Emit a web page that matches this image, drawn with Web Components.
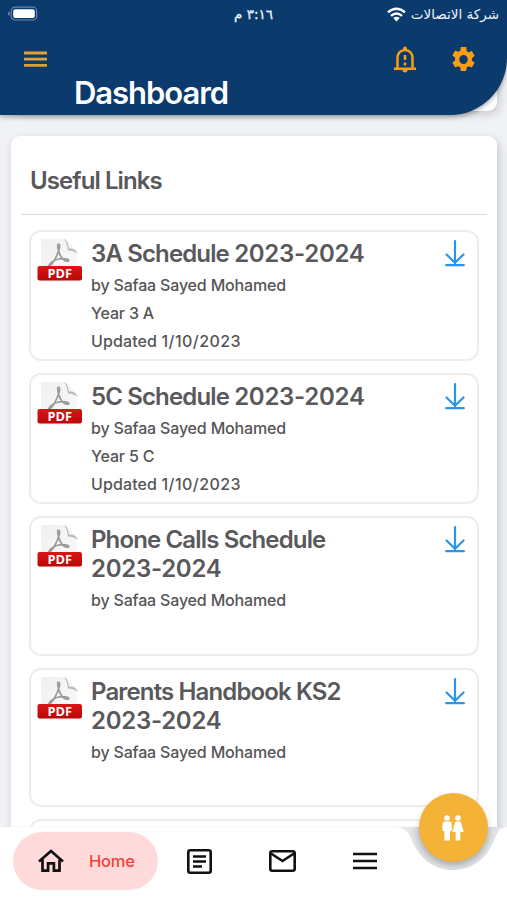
<!DOCTYPE html>
<html lang="en"><head><meta charset="utf-8"><title>Dashboard</title>
<style>
html,body{margin:0;height:900px;overflow:hidden;background:#f1f2f6}
body{font-family:Inter,"Liberation Sans",sans-serif;color:#58585a}
</style></head><body>
<school-app></school-app>
<script>
const define=(name,html,init)=>customElements.define(name,class extends HTMLElement{
  connectedCallback(){
    if(this.shadowRoot)return;
    const root=this.attachShadow({mode:'open'});
    const t=document.createElement('template');
    t.innerHTML=html;
    root.append(t.content.cloneNode(true));
    if(init)init(this,root);
  }
});

define('status-bar',`<style>
:host{display:grid;grid-template-columns:1fr auto 1fr;align-items:center;height:28px;padding:0 8px 0 8px;color:#eef5ff;font:14px/28px "DejaVu Sans",sans-serif}
svg{display:block}
.c{display:flex;align-items:center;justify-content:flex-end;gap:5px}
#time{font-size:13.5px;letter-spacing:-.35px;-webkit-text-stroke:.3px}
#net{font-size:13.5px;letter-spacing:0;white-space:nowrap}
</style>
<svg width="31" height="16" viewBox="0 0 31 16"><path d="M1.6 5.5v4.2Q0 9.400 0 7.600T1.600 5.500z" fill="#7d95b5"/><rect x="3.200" y="1.200" width="25.500" height="12.800" rx="3.800" fill="none" stroke="#6a86aa" stroke-width="1.200"/><rect x="5.200" y="3.200" width="21.600" height="8.800" rx="2" fill="#fff"/></svg>
<span id="time" dir="rtl">٣:١٦ م</span>
<div class="c"><svg width="19" height="15" viewBox="0 0 19 15"><g fill="none" stroke="#fff" stroke-width="2.500"><path d="M1 5.400Q9.500-2 18 5.400"/><path d="M4 8.900Q9.500 4.200 15 8.900"/></g><path d="M6.300 11.100Q9.500 8.400 12.700 11.100L9.500 14.500z" fill="#fff"/></svg><span id="net" dir="rtl">شركة الاتصالات</span></div>`);

define('app-header',`<style>
:host{display:block;box-sizing:border-box;height:115px;background:#0b3a6c;border-bottom-right-radius:57px;box-shadow:0 2px 5px #0005;overflow:hidden}
.row{display:flex;align-items:center;height:63px;padding:0 32.500px 0 24px}
.gap{flex:1}
svg{display:block}
.bell{margin-right:35px}
h1{margin:-17px 0 0 74px;color:#fff;font-size:31px;line-height:38px;font-weight:600;letter-spacing:-1.05px}
</style>
<status-bar></status-bar>
<div class="row">
<svg width="23" height="17" viewBox="0 0 23 17"><path d="M0 2h23M0 8.200h23M0 14.400h23" stroke="#e3a02f" stroke-width="2.800"/></svg><span class="gap"></span>
<svg class="bell" width="24" height="28" viewBox="0 0 24 28" fill="none" stroke="#f99d12"><path d="M4.500 22V11.500a7.500 7.500 0 0 1 15 0V22" stroke-width="2.500"/><path d="M1 22.700h22" stroke-width="2.600"/><path d="M12 9v5M12 16.500v3" stroke-width="2.600"/><path d="M10 4V2.500a2 2 0 0 1 4 0V4zM9.500 24h5a2.500 2.500 0 0 1-5 0z" fill="#f99d12" stroke="none"/></svg>
<svg width="23" height="25" viewBox="2.200 2 19.600 20" preserveAspectRatio="none"><path fill="#f99d12" d="M19.140 12.940c.040-.300.060-.610.060-.940s-.020-.640-.070-.940l2.030-1.580a.490.490 0 0 0 .120-.610l-1.920-3.320a.488.488 0 0 0-.590-.220l-2.390.960c-.500-.380-1.030-.700-1.620-.940l-.360-2.540A.484.484 0 0 0 13.920 2h-3.840c-.240 0-.430.170-.470.410l-.360 2.540c-.590.240-1.130.570-1.620.940l-2.390-.960a.477.477 0 0 0-.590.220L2.740 8.470c-.120.210-.080.470.120.610l2.030 1.580c-.050.300-.090.630-.090.940s.020.640.070.940l-2.030 1.580a.490.490 0 0 0-.120.610l1.920 3.320c.120.220.370.290.590.220l2.390-.960c.500.380 1.030.700 1.620.940l.360 2.540c.050.240.240.410.480.410h3.840c.240 0 .440-.170.470-.410l.360-2.540c.590-.240 1.130-.560 1.620-.940l2.390.960c.220.080.470 0 .590-.220l1.920-3.320a.477.477 0 0 0-.120-.610zM12 15.600a3.600 3.600 0 1 1 0-7.200 3.600 3.600 0 0 1 0 7.200z"/></svg>
</div><h1>Dashboard</h1>`);

define('pdf-icon',`<style>:host{display:block;width:46px;height:46px;margin-top:-1px}text{font:700 12.500px "Open Sans","Noto Sans",sans-serif}svg{display:block}</style>
<svg width="46" height="46" viewBox="0 0 46 46"><defs><linearGradient id="p" x2="1" y2="1"><stop stop-color="#f0f0f0"/><stop offset="1" stop-color="#fafafa"/></linearGradient><linearGradient id="r" x2="0" y2="1"><stop stop-color="#db1515"/><stop offset="1" stop-color="#b90707"/></linearGradient></defs>
<path d="M4 1h24c3 2 10 9 12 13v30H4z" fill="url(#p)"/><path d="M27 1c4 2 4 6 5 9.500 4-.500 7 1 9 5.500-3-2-6-3.500-10-3.500-1-4-1-8-4-11.500z" fill="#b9bbbc"/>
<path d="M21.500 6c-2 0 0 8 2 12 2 3 5 6 8 5 2-2-6-3-10-2-4 1-9 4-10 7 4 0 9-11 11-18 .300-3 0-4-1-4z" fill="none" stroke="#999b9c" stroke-width="1.700"/>
<rect x=".5" y="28" width="44.500" height="14.500" rx="2" fill="url(#r)"/><text x="10.500" y="39.700" fill="#fff" textLength="24.500" lengthAdjust="spacingAndGlyphs">PDF</text></svg>`);

define('link-card',`<style>
:host{display:flex;box-sizing:border-box;width:450px;height:var(--h,131px);border:2px solid #ededef;border-radius:12px;padding:7px 12px 0 6px;background:#fff}
.b{flex:1;margin-left:8px}
h3{margin:0;font-size:24px;line-height:29px;font-weight:560;letter-spacing:-.86px;white-space:pre-line;color:#59595b}
h3 span{letter-spacing:-.28px}
.s{margin-top:3px;font-size:16px;line-height:28px;font-weight:540;letter-spacing:-.18px;color:#555557}
svg{margin-top:1px}
</style><pdf-icon></pdf-icon><div class="b"><h3></h3><div class="s"><slot></slot></div></div>
<svg width="20" height="27" viewBox="0 0 20 27" fill="none" stroke="#2a94eb" stroke-width="2.200" stroke-linecap="round" stroke-linejoin="round"><path d="M10 1.200v22M1.500 14.500l8.500 8.300 8.500-8.300M1.200 25.200h17.600"/></svg>`,
(el,root)=>{
  const h=root.querySelector('h3');
  h.textContent=el.getAttribute('heading').replace('|','\n');
  const years=el.getAttribute('years');
  if(years){const s=document.createElement('span');s.textContent=years;h.append(s);}
});

define('content-panel',`<style>
:host{display:block;box-sizing:border-box;width:486px;background:#fff;border-radius:9px;box-shadow:2px 3px 10px #0000002e}
</style><slot></slot>`);

define('links-view',`<style>
:host{display:flex;flex-direction:column;gap:25px;align-items:center;box-sizing:border-box;height:900px;overflow:hidden;background:#f1f2f6;padding:0 0 0 1px}
.prev{flex:none;height:111px}.main{flex:none;height:900px;padding:0 10px}
h2{margin:0;height:78px;padding:0 0 0 9px;border-bottom:1px solid #dcdcde;font-size:24px;line-height:90px;font-weight:560;letter-spacing:-.92px;color:#58585a}
.list{display:flex;flex-direction:column;gap:12px;margin:15px 0 0 8px}
.tall{--h:139.500px}
.d{letter-spacing:.12px}.d span{letter-spacing:.44px}
</style>
<content-panel class="prev"></content-panel>
<content-panel class="main"><h2>Useful Links</h2><div class="list">
<link-card heading="3A Schedule " years="2023-2024"><div>by Safaa Sayed Mohamed</div><div>Year 3 A</div><div class="d">Updated <span>1/10/2023</span></div></link-card>
<link-card heading="5C Schedule " years="2023-2024"><div>by Safaa Sayed Mohamed</div><div>Year 5 C</div><div class="d">Updated <span>1/10/2023</span></div></link-card>
<link-card class="tall" heading="Phone Calls Schedule|" years="2023-2024"><div>by Safaa Sayed Mohamed</div></link-card>
<link-card class="tall" heading="Parents Handbook KS2|" years="2023-2024"><div>by Safaa Sayed Mohamed</div></link-card>
<link-card heading=""></link-card>
</div></content-panel>`);

define('bottom-nav',`<style>
:host{display:grid;width:507px;height:120px}
:host>*{grid-area:1/1}
.items{display:flex;align-items:center;align-self:end;height:78px;box-sizing:border-box;padding:0 0 0 13px}
.home{display:flex;align-items:center;box-sizing:border-box;width:145px;height:58px;border-radius:29px;background:#ffdada;padding-left:25px;color:#f04438;font-size:16.500px;font-weight:540;letter-spacing:-.2px;gap:25px}
.i{display:block}.n{margin-left:29px}.m{margin-left:57px}.h{margin-left:57px}
.fab{display:grid;place-items:center;width:69px;height:69px;border-radius:50%;background:#f4b236;margin:13px 0 0 418.500px;box-shadow:0 3px 6px #0003}
</style>
<svg width="507" height="120" viewBox="0 0 507 120"><defs><filter id="s" x="-5%" y="-20%" width="110%" height="140%"><feGaussianBlur stdDeviation="2.500"/></filter><radialGradient id="g" gradientUnits="userSpaceOnUse" cx="453" cy="49" r="46"><stop offset=".65" stop-color="#cfd2d6"/><stop offset="1" stop-color="#e6e8eb"/></radialGradient></defs>
<path d="M0 47H507V52H0z" fill="#777" opacity=".10" filter="url(#s)"/><path d="M400 47H507V95H400z" fill="url(#g)"/>
<path d="M0 47H392Q407 47 411 58C419 80 435 90 453 90S487 80 495 58Q499 47 507 47V120H0z" fill="#fff"/></svg>
<div class="items"><div class="home"><svg class="i" width="26" height="24" viewBox="0 0 26 24" fill="none" stroke="#111" stroke-width="2.700"><path d="M1 12.500L13 2l12 10.500M4.500 10.500V21.700h5.600v-7.400h5.800v7.400h5.600V10.500"/></svg>Home</div>
<svg class="i n" width="25" height="25" viewBox="0 0 25 25" fill="none" stroke="#111" stroke-width="2.600"><rect x="1.300" y="1.300" width="22.400" height="22.400" rx="2"/><path d="M6 7.500h13M6 12.500h13M6 17.500h9"/></svg>
<svg class="i m" width="27" height="22" viewBox="0 0 27 22" fill="none" stroke="#111" stroke-width="2.600"><rect x="1.300" y="1.300" width="24.400" height="19.400" rx="2"/><path d="M2 3.500l11.500 7.500L25 3.500"/></svg>
<svg class="i h" width="24" height="18" viewBox="0 0 24 18"><path d="M0 2h24M0 9h24M0 16h24" stroke="#111" stroke-width="2.700"/></svg></div>
<div class="fab"><svg width="22" height="26" viewBox="0 0 22 26" fill="#fff"><circle cx="5" cy="3" r="2.800"/><circle cx="16" cy="3" r="2.800"/><path d="M2.500 6.500h5.200q2 0 2 2V16H8v9.500H2.300V16H.5V8.500q0-2 2-2zM14.500 6.500h3q1.300 0 1.700 1.400L21.800 17H18.300v8.500h-4.600V17h-3.400L12.800 7.900q.4-1.400 1.700-1.400z"/></svg></div>`);

define('school-app',`<style>
:host{display:grid;width:507px;height:900px;overflow:hidden}
:host>*{grid-area:1/1}
app-header{align-self:start}bottom-nav{align-self:end}
</style><links-view></links-view><app-header></app-header><bottom-nav></bottom-nav>`);
</script></body></html>
